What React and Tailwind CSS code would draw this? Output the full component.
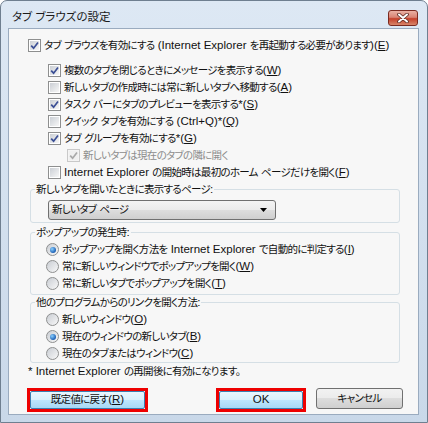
import React from 'react';

// Latin runs are set a little larger than the kana/kanji, like Meiryo UI in the shot.
// "&X" inside a latin run marks an underlined access key.
function T({ s }) {
  return s.split(/([\x20-\x7e]+)/).map((part, i) => {
    if (!part) return null;
    if (!/[\x20-\x7e]/.test(part)) return <React.Fragment key={i}>{part}</React.Fragment>;
    const bits = part.split(/&(.)/);
    return (
      <span key={i} className="text-[11.5px] tracking-normal">
        {bits.map((b, j) => (j % 2 ? <u key={j}>{b}</u> : b))}
      </span>
    );
  });
}

function Check({ checked, disabled }) {
  return (
    <span
      className={`flex h-[13px] w-[13px] shrink-0 items-center justify-center border p-[1px] ${
        disabled ? 'border-[#c9c9c9] bg-[#f4f4f4]' : 'border-[#8e8f8f] bg-white'
      }`}
    >
      <span
        className={`relative flex h-full w-full items-center justify-center ${
          disabled ? 'bg-[#f0f0f0]' : 'bg-[linear-gradient(135deg,#cbcfd5,#f7f7f7)]'
        }`}
      >
        {checked && (
          <svg width="9" height="9" viewBox="0 0 9 9" className="absolute">
            <path
              d="M1.2 4.6 L3.6 7.2 L8 1.4"
              stroke={disabled ? '#a9a9a9' : '#3b4f95'}
              strokeWidth="1.7"
              fill="none"
            />
          </svg>
        )}
      </span>
    </span>
  );
}

function Radio({ on }) {
  return (
    <span className="flex h-[13px] w-[13px] shrink-0 items-center justify-center rounded-full border border-[#8e8f8f] bg-[linear-gradient(135deg,#c9cdd3,#f8f8f8)]">
      {on && (
        <span className="h-[6px] w-[6px] rounded-full bg-[radial-gradient(circle_at_35%_35%,#8ad0ff,#1c5fb4_70%)]" />
      )}
    </span>
  );
}

function CheckRow({ checked, disabled, indent, s }) {
  return (
    <div className={`flex h-[17px] items-center gap-[3px] whitespace-pre ${indent}`}>
      <Check checked={checked} disabled={disabled} />
      <span className={disabled ? 'text-[#8d8d8d]' : ''}>
        <T s={s} />
      </span>
    </div>
  );
}

function RadioRow({ on, s }) {
  return (
    <div className="ml-[15px] flex h-[17px] items-center gap-[3px] whitespace-pre">
      <Radio on={on} />
      <span>
        <T s={s} />
      </span>
    </div>
  );
}

function Group({ label, className, children }) {
  return (
    <fieldset className={`ml-[21px] w-[370px] rounded-[3px] border border-[#d5dfe5] ${className}`}>
      <legend className="ml-[4px] px-[1px] leading-[15px]">
        <T s={label} />
      </legend>
      {children}
    </fieldset>
  );
}

const blueBtn =
  'flex h-full w-full items-center justify-center rounded-[2px] border border-[#3c7fb1] bg-[linear-gradient(#eaf6fd_0%,#d9f0fc_50%,#bee6fd_50%,#a7d9f5_100%)]';

export default function App() {
  return (
    <div className="flex h-[423px] w-[428px] flex-col rounded-t-[7px] border border-[#6f7f90] bg-[linear-gradient(#dde8f4,#c9d8e9)] pr-[8px] pb-[7px] pl-[7px] font-['Liberation_Sans','Noto_Sans_CJK_JP',sans-serif] text-[10.5px] tracking-[-0.7px] text-[#111] [font-feature-settings:'palt']">
      {/* title bar */}
      <div className="flex h-[27px] items-start justify-between">
        <span className="mt-[6px] ml-[4px] text-[11.5px] leading-[20px] tracking-normal text-[#1b1b1b]">タブ ブラウズの設定</span>
        <button className="mt-[9px] mr-[1px] flex h-[16px] w-[30px] items-center justify-center rounded-[3px] border border-[#7a2a20] bg-[linear-gradient(#eab0a3_0%,#d98474_45%,#c5402a_55%,#d8866a_100%)]">
          <svg width="12" height="10" viewBox="0 0 12 10">
            <path d="M2 1.5 L10 8.5 M10 1.5 L2 8.5" stroke="#5a2a22" strokeWidth="3.6" strokeLinecap="round" />
            <path d="M2 1.5 L10 8.5 M10 1.5 L2 8.5" stroke="#ffffff" strokeWidth="2" strokeLinecap="round" />
          </svg>
        </button>
      </div>

      {/* client area */}
      <div className="flex-1 border border-[#9aabbf] bg-[#f7f7f7] pt-[8px]">
        <CheckRow checked indent="pl-[19px]" s="タブ ブラウズを有効にする (Internet Explorer を再起動する必要があります)(&E)" />

        <div className="mt-[8px]">
          <CheckRow checked indent="pl-[39px]" s="複数のタブを閉じるときにメッセージを表示する(&W)" />
          <CheckRow indent="pl-[39px]" s="新しいタブの作成時には常に新しいタブへ移動する(&A)" />
          <CheckRow checked indent="pl-[39px]" s="タスク バーにタブのプレビューを表示する*(&S)" />
          <CheckRow indent="pl-[39px]" s="クイック タブを有効にする (Ctrl+Q)*(&Q)" />
          <CheckRow checked indent="pl-[39px]" s="タブ グループを有効にする*(&G)" />
          <CheckRow checked disabled indent="pl-[58px]" s="新しいタブは現在のタブの隣に開く" />
          <CheckRow indent="pl-[39px]" s="Internet Explorer の開始時は最初のホーム ページだけを開く(&F)" />
        </div>

        <Group label="新しいタブを開いたときに表示するページ:" className="mt-[1px] pb-[2px]">
          <div className="mt-[3px] ml-[17px] flex h-[20px] w-[228px] items-center justify-between rounded-[3px] border border-[#707070] bg-[linear-gradient(#f4f4f4_0%,#ebebeb_50%,#dddddd_50%,#cfcfcf_100%)] pr-[8px] pl-[3px]">
            <span className="whitespace-pre">
              <T s="新しいタブ ページ" />
            </span>
            <svg width="7" height="4" viewBox="0 0 7 4">
              <path d="M0 0 H7 L3.5 4 Z" fill="#000" />
            </svg>
          </div>
        </Group>

        <Group label="ポップアップの発生時:" className="mt-[2px] pb-[2px]">
          <div className="mt-[1px]">
            <RadioRow on s="ポップアップを開く方法を Internet Explorer で自動的に判定する(&I)" />
            <RadioRow s="常に新しいウィンドウでポップアップを開く(&W)" />
            <RadioRow s="常に新しいタブでポップアップを開く(&T)" />
          </div>
        </Group>

        <Group label="他のプログラムからのリンクを開く方法:" className="">
          <div className="mt-[1px]">
            <RadioRow s="新しいウィンドウ(&O)" />
            <RadioRow on s="現在のウィンドウの新しいタブ(&B)" />
            <RadioRow s="現在のタブまたはウィンドウ(&C)" />
          </div>
        </Group>

        <div className="flex h-[17px] items-center whitespace-pre pl-[19px]">
          <T s="* Internet Explorer の再開後に有効になります。" />
        </div>

        <div className="mt-[8px] flex items-start">
          <div className="ml-[18px] h-[24px] w-[121px] border-[3px] border-[#ee0000]">
            <button className={blueBtn}>
              <T s="既定値に戻す(&R)" />
            </button>
          </div>
          <div className="ml-[68px] h-[24px] w-[90px] border-[3px] border-[#ee0000]">
            <button className={blueBtn}>
              <T s="OK" />
            </button>
          </div>
          <button className="ml-[10px] flex h-[21px] w-[87px] items-center justify-center rounded-[3px] border border-[#707070] bg-[linear-gradient(#f2f2f2_0%,#ebebeb_50%,#dddddd_50%,#cfcfcf_100%)]">
            キャンセル
          </button>
        </div>
      </div>
    </div>
  );
}
